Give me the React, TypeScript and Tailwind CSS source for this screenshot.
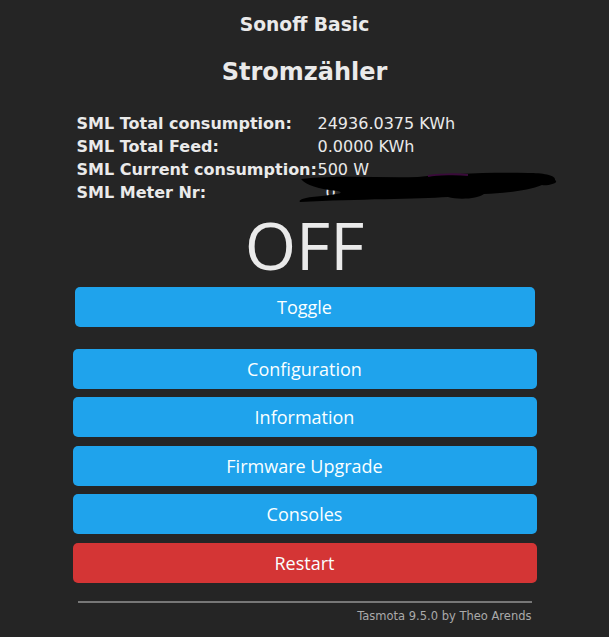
import React from "react";

const Btn = ({ label, red = false, className = "" }: { label: string; red?: boolean; className?: string }) => (
  <button
    className={
      "block w-full h-[40px] rounded-[5px] text-[18px] leading-[40px] text-[#faffff] " +
      (red ? "bg-[#d43535] " : "bg-[#1fa3ec] ") +
      className
    }
    style={{ fontFamily: '"Open Sans", "Noto Sans", sans-serif' }}
  >
    {label}
  </button>
);

export default function App() {
  const rows: [string, string][] = [
    ["SML Total consumption:", "24936.0375 KWh"],
    ["SML Total Feed:", "0.0000 KWh"],
    ["SML Current consumption:", "500 W"],
  ];
  return (
    <div
      className="min-h-screen bg-[#252525] text-[#eaeaea] flex justify-center"
      style={{ fontFamily: '"DejaVu Sans", Verdana, sans-serif' }}
    >
      <div className="w-[464px] pt-[14px]">
        <h3 className="text-center font-bold text-[18.7px] leading-[22px]">Sonoff Basic</h3>
        <h2 className="text-center font-bold text-[24px] leading-[28px] mt-[22px]">Stromzähler</h2>
        <div className="mt-[26px] pl-[4px] text-[16px]">
          {rows.map(([k, v]) => (
            <div key={k} className="flex h-[23px] items-center">
              <div className="w-[241px] font-bold whitespace-nowrap">{k}</div>
              <div className="whitespace-nowrap">{v}</div>
            </div>
          ))}
          <div className="flex h-[23px] items-center relative">
            <div className="w-[241px] font-bold whitespace-nowrap">SML Meter Nr:</div>
            <div className="whitespace-nowrap pl-[8px]">0...</div>
            <svg
              className="absolute left-[221px] top-[-12px]"
              width="262"
              height="36"
              viewBox="0 0 262 36"
            >
              <path
                d="M3 10 C 40 6, 80 9, 120 8 C 150 5, 190 3, 230 4 C 245 4, 258 6, 257 11 C 262 14, 250 17, 244 16 C 230 22, 205 24, 186 25 C 180 30, 160 31, 150 28 C 120 30, 60 30, 2 33 C 0 31, 6 29, 14 28 C 30 26, 50 25, 40 22 C 20 20, 8 16, 3 10 Z"
                fill="#000"
              />
              <path d="M130 7 C 140 5, 160 5, 170 6" stroke="#3a0a3a" strokeWidth="2" fill="none" />
            </svg>
          </div>
        </div>
        <div
          className="text-center text-[66px] leading-[78px] mt-[1px]"
          style={{ fontFamily: '"Open Sans", "Noto Sans", sans-serif' }}
        >
          OFF
        </div>
        <div className="px-[2px] mt-[4px]">
          <Btn label="Toggle" />
        </div>
        <Btn label="Configuration" className="mt-[22px]" />
        <Btn label="Information" className="mt-[8px]" />
        <Btn label="Firmware Upgrade" className="mt-[9px]" />
        <Btn label="Consoles" className="mt-[8px]" />
        <Btn label="Restart" red className="mt-[9px]" />
        <div className="mx-[5px] mt-[18px] h-[2px] bg-[#777]" />
        <div className="text-right pr-[5px] text-[11.5px] text-[#aaa] mt-[5px]">Tasmota 9.5.0 by Theo Arends</div>
      </div>
    </div>
  );
}
